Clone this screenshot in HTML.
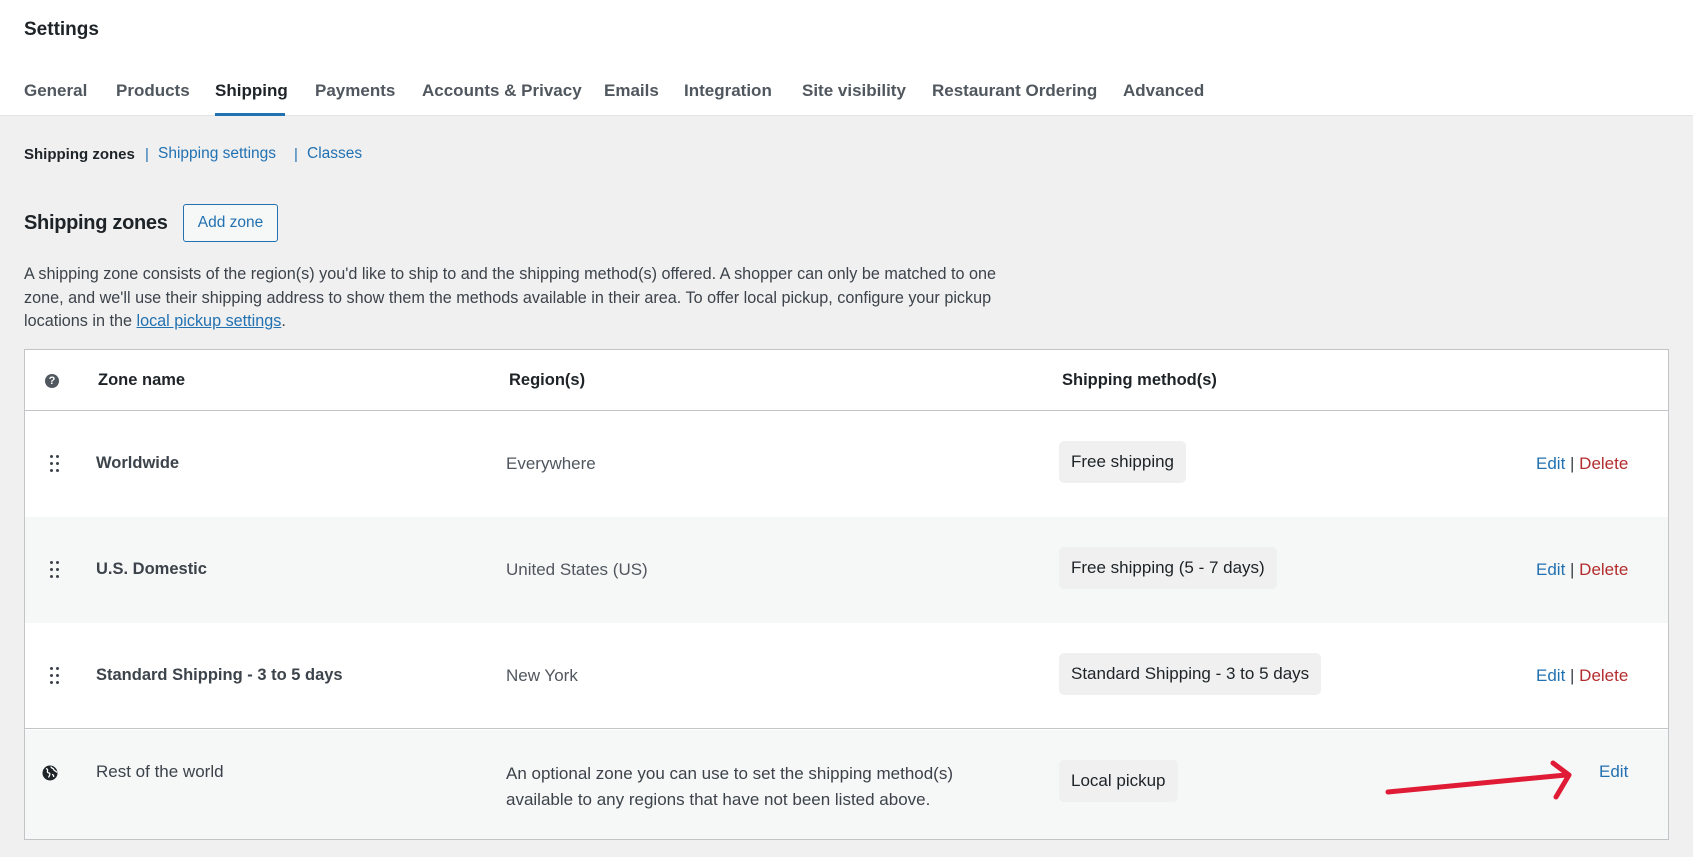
<!DOCTYPE html>
<html><head><meta charset="utf-8"><style>
*{box-sizing:border-box;margin:0;padding:0}
body{width:1693px;height:857px;background:#f0f0f1;font-family:"Liberation Sans",sans-serif;color:#3c434a;position:relative;overflow:hidden;font-size:16px}
.hdr{position:absolute;left:0;top:0;width:1693px;height:116px;background:#fff;border-bottom:1px solid #e4e4e4}
.abs{position:absolute;white-space:nowrap}
.tab{position:absolute;top:81px;font-size:17px;font-weight:bold;color:#50575e}
.blue{color:#2271b1}
.red{color:#b32d2e}
.tbl{position:absolute;left:24px;top:349px;width:1645px;height:491px;border:1px solid #c3c4c7;background:#fff}
.row{position:absolute;left:0;width:1643px}
.pill{position:absolute;background:#f0f0f0;border-radius:5px;color:#1d2327;font-size:17px;padding:0 12px;line-height:42px;height:42px}
.dots{position:absolute;left:49px;width:10px;height:18px}
.dots i{position:absolute;width:3px;height:3px;background:#3c434a;border-radius:50%}
.zn{position:absolute;left:71px;top:43px;font-size:16.5px;font-weight:bold;color:#3c434a;white-space:nowrap}
</style></head><body>
<div class="hdr"></div>
<div class="abs" style="left:24px;top:19px;font-size:19px;font-weight:bold;color:#1d2327">Settings</div>
<div class="tab" style="left:24px">General</div>
<div class="tab" style="left:116px">Products</div>
<div class="tab" style="left:215px;color:#1d2327">Shipping</div>
<div class="abs" style="left:215px;top:113px;width:70px;height:3px;background:#2271b1"></div>
<div class="tab" style="left:315px">Payments</div>
<div class="tab" style="left:422px">Accounts &amp; Privacy</div>
<div class="tab" style="left:604px">Emails</div>
<div class="tab" style="left:684px">Integration</div>
<div class="tab" style="left:802px">Site visibility</div>
<div class="tab" style="left:932px">Restaurant Ordering</div>
<div class="tab" style="left:1123px">Advanced</div>

<div class="abs" style="left:24px;top:146px;font-size:15px;font-weight:bold;color:#1d2327">Shipping zones</div>
<div class="abs blue" style="left:145px;top:146px;font-size:15px">|</div>
<div class="abs blue" style="left:158px;top:145px;font-size:15.5px">Shipping settings</div>
<div class="abs blue" style="left:294px;top:146px;font-size:15px">|</div>
<div class="abs blue" style="left:307px;top:145px;font-size:15.5px">Classes</div>

<div class="abs" style="left:24px;top:212px;font-size:20px;font-weight:bold;color:#1d2327;letter-spacing:-0.3px">Shipping zones</div>
<div class="abs" style="left:183px;top:204px;width:95px;height:38px;border:1px solid #2271b1;border-radius:3px;background:#f6f7f7;color:#2271b1;font-size:15.5px;text-align:center;line-height:36px">Add zone</div>

<div class="abs" style="left:24px;top:263px;font-size:16.2px;line-height:23.5px;color:#3c434a">A shipping zone consists of the region(s) you'd like to ship to and the shipping method(s) offered. A shopper can only be matched to one<br>zone, and we'll use their shipping address to show them the methods available in their area. To offer local pickup, configure your pickup<br>locations in the <span class="blue" style="text-decoration:underline">local pickup settings</span>.</div>

<div class="tbl">
 <div class="row" style="top:0;height:61px;border-bottom:1px solid #c3c4c7">
  <div class="abs" style="left:20px;top:24px;width:14px;height:14px;border-radius:50%;background:#50575e;color:#fff;font-size:11px;font-weight:bold;text-align:center;line-height:14px">?</div>
  <div class="abs" style="left:73px;top:21px;font-size:16.5px;font-weight:bold;color:#1d2327">Zone name</div>
  <div class="abs" style="left:484px;top:21px;font-size:16.5px;font-weight:bold;color:#1d2327">Region(s)</div>
  <div class="abs" style="left:1037px;top:21px;font-size:16.5px;font-weight:bold;color:#1d2327">Shipping method(s)</div>
 </div>
 <div class="row" style="top:61px;height:106px;background:#fff">
  <div class="dots" style="left:25px;top:44px"><i style="left:0;top:0"></i><i style="left:6px;top:0"></i><i style="left:0;top:7px"></i><i style="left:6px;top:7px"></i><i style="left:0;top:14px"></i><i style="left:6px;top:14px"></i></div>
  <div class="zn">Worldwide</div>
  <div class="abs" style="left:481px;top:43px;font-size:17px;color:#50575e">Everywhere</div>
  <div class="pill" style="left:1034px;top:30px">Free shipping</div>
  <div class="abs" style="left:1511px;top:43px;font-size:17px"><span class="blue">Edit</span> | <span class="red">Delete</span></div>
 </div>
 <div class="row" style="top:167px;height:106px;background:#f6f7f7">
  <div class="dots" style="left:25px;top:44px"><i style="left:0;top:0"></i><i style="left:6px;top:0"></i><i style="left:0;top:7px"></i><i style="left:6px;top:7px"></i><i style="left:0;top:14px"></i><i style="left:6px;top:14px"></i></div>
  <div class="zn">U.S. Domestic</div>
  <div class="abs" style="left:481px;top:43px;font-size:17px;color:#50575e">United States (US)</div>
  <div class="pill" style="left:1034px;top:30px">Free shipping (5 - 7 days)</div>
  <div class="abs" style="left:1511px;top:43px;font-size:17px"><span class="blue">Edit</span> | <span class="red">Delete</span></div>
 </div>
 <div class="row" style="top:273px;height:106px;background:#fff;border-bottom:1px solid #c3c4c7">
  <div class="dots" style="left:25px;top:44px"><i style="left:0;top:0"></i><i style="left:6px;top:0"></i><i style="left:0;top:7px"></i><i style="left:6px;top:7px"></i><i style="left:0;top:14px"></i><i style="left:6px;top:14px"></i></div>
  <div class="zn">Standard Shipping - 3 to 5 days</div>
  <div class="abs" style="left:481px;top:43px;font-size:17px;color:#50575e">New York</div>
  <div class="pill" style="left:1034px;top:30px">Standard Shipping - 3 to 5 days</div>
  <div class="abs" style="left:1511px;top:43px;font-size:17px"><span class="blue">Edit</span> | <span class="red">Delete</span></div>
 </div>
 <div class="row" style="top:380px;height:109px;background:#f6f7f7">
  <svg class="abs" style="left:17px;top:35px" width="16" height="16" viewBox="0 0 16 16"><circle cx="8" cy="8" r="7.5" fill="#1d2327"/><path d="M4 3.5c1.5.5 2 1.5 1.5 2.5s.5 2 1.5 2 1 1.5.5 2.5l-1 2M9 1.5c0 1.5 1 1.5 2 2s.5 1.5 1.5 2 2 1 2.5 2M10 9.5c1 0 2 1 1.5 2.5" stroke="#fff" stroke-width="1.3" fill="none"/></svg>
  <div class="abs" style="left:71px;top:32px;font-size:17px">Rest of the world</div>
  <div class="abs" style="left:481px;top:31px;font-size:17px;line-height:26px;color:#3c434a">An optional zone you can use to set the shipping method(s)<br>available to any regions that have not been listed above.</div>
  <div class="pill" style="left:1034px;top:30px">Local pickup</div>
  <div class="abs blue" style="left:1574px;top:32px;font-size:17px">Edit</div>
 </div>
</div>
<svg class="abs" style="left:0;top:0" width="1693" height="857"><path d="M1388 792 L1566 775 M1553 763 L1569 775 L1556 797" stroke="#e01b35" stroke-width="5" fill="none" stroke-linecap="round" stroke-linejoin="round"/></svg>
</body></html>
